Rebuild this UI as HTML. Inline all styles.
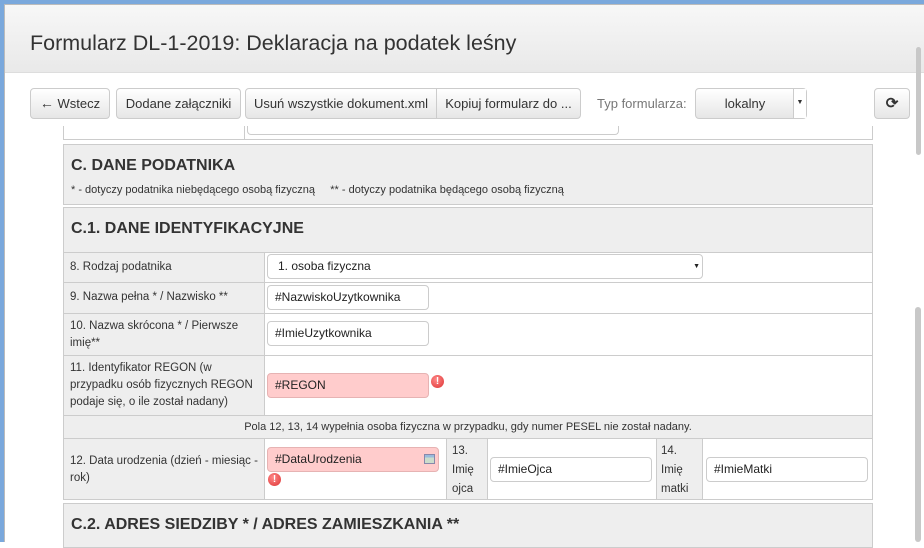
<!DOCTYPE html>
<html><head><meta charset="utf-8"><style>
*{box-sizing:border-box;margin:0;padding:0}
body{width:924px;height:542px;overflow:hidden;background:#fff;font-family:"Liberation Sans",Arial,sans-serif;color:#333;position:relative}
.a{position:absolute}
.btn{position:absolute;top:88px;height:31px;border:1px solid #ccc;border-radius:4px;background:linear-gradient(#fff,#e6e6e6);font-size:13px;line-height:29px;text-align:center;color:#333;white-space:nowrap}
.cell{position:absolute;border:1px solid #ccc;font-size:11.5px;line-height:17px}
.g{background:#eee}
.inp{position:absolute;height:25px;border:1px solid #ccc;border-radius:4px;background:#fff;font-size:12px;line-height:23px;padding-left:7px;color:#222}
.err{background:#fcc;border-color:#e6b3b3}
.ex{position:absolute;width:13px;height:13px;border-radius:50%;background:radial-gradient(circle at 40% 35%,#f88,#d33);color:#fff;font-size:10px;font-weight:bold;line-height:13px;text-align:center}
h3{font-size:16px;font-weight:bold;color:#333}
</style></head><body>
<div class="a" style="left:0;top:0;width:924px;height:4px;background:#7aa8dc"></div>
<div class="a" style="left:0;top:0;width:4px;height:542px;background:#7aa8dc"></div>
<div class="a" style="left:4px;top:4px;width:920px;height:538px;border:1px solid #bbb;border-right:none;border-bottom:none"></div>
<div class="a" style="left:5px;top:5px;width:919px;height:68px;background:linear-gradient(#f7f7f7,#e9e9e9);border-bottom:1px solid #ddd"></div>
<div class="a" style="left:30px;top:31px;font-size:21.5px;color:#333">Formularz DL-1-2019: Deklaracja na podatek leśny</div>

<div class="btn" style="left:30px;width:80px"><b style="font-size:14px">&#8592;</b> Wstecz</div>
<div class="btn" style="left:116px;width:125px">Dodane załączniki</div>
<div class="btn" style="left:245px;width:192px;border-radius:4px 0 0 4px">Usuń wszystkie dokument.xml</div>
<div class="btn" style="left:436px;width:145px;border-radius:0 4px 4px 0">Kopiuj formularz do ...</div>
<div class="a" style="left:597px;top:96px;font-size:13px;color:#777">Typ formularza:</div>
<div class="btn" style="left:695px;width:112px;padding-right:12px">lokalny<div class="a" style="right:0;top:0;width:13px;height:29px;border-left:1px solid #ccc;background:#fff;font-size:7px;line-height:27px">▼</div></div>
<div class="btn" style="left:874px;width:36px;font-weight:bold;font-size:15px">⟳</div>

<div class="cell" style="left:63px;top:126px;width:182px;height:14px;border-top:none"></div>
<div class="cell" style="left:244px;top:126px;width:629px;height:14px;border-top:none"></div>
<div class="a" style="left:247px;top:126px;width:372px;height:9px;border:1px solid #ccc;border-top:none;border-radius:0 0 4px 4px"></div>

<div class="cell g" style="left:63px;top:144px;width:810px;height:61px;padding:12px 7px"><h3>C. DANE PODATNIKA</h3><div style="font-size:11px;margin-top:8px;white-space:pre">* - dotyczy podatnika niebędącego osobą fizyczną     ** - dotyczy podatnika będącego osobą fizyczną</div></div>
<div class="cell g" style="left:63px;top:207px;width:810px;height:46px;padding:12px 7px"><h3>C.1. DANE IDENTYFIKACYJNE</h3></div>

<div class="cell g" style="left:63px;top:252px;width:202px;height:31px;padding:6px 6px">8. Rodzaj podatnika</div>
<div class="cell" style="left:264px;top:252px;width:609px;height:31px"></div>
<div class="inp" style="left:267px;top:254px;width:436px;padding-left:10px">1. osoba fizyczna<span class="a" style="right:2px;top:0;font-size:7px">▼</span></div>

<div class="cell g" style="left:63px;top:282px;width:202px;height:32px;padding:6px 6px">9. Nazwa pełna * / Nazwisko **</div>
<div class="cell" style="left:264px;top:282px;width:609px;height:32px"></div>
<div class="inp" style="left:267px;top:285px;width:162px">#NazwiskoUzytkownika</div>

<div class="cell g" style="left:63px;top:313px;width:202px;height:43px;padding:4px 6px">10. Nazwa skrócona * / Pierwsze imię**</div>
<div class="cell" style="left:264px;top:313px;width:609px;height:43px"></div>
<div class="inp" style="left:267px;top:321px;width:162px">#ImieUzytkownika</div>

<div class="cell g" style="left:63px;top:355px;width:202px;height:61px;padding:4px 6px">11. Identyfikator REGON (w przypadku osób fizycznych REGON podaje się, o ile został nadany)</div>
<div class="cell" style="left:264px;top:355px;width:609px;height:61px"></div>
<div class="inp err" style="left:267px;top:373px;width:162px">#REGON</div>
<div class="ex" style="left:431px;top:375px">!</div>

<div class="cell g" style="left:63px;top:415px;width:810px;height:24px;text-align:center;padding-top:3px;font-size:11px">Pola 12, 13, 14 wypełnia osoba fizyczna w przypadku, gdy numer PESEL nie został nadany.</div>

<div class="cell g" style="left:63px;top:438px;width:202px;height:62px;padding:14px 6px">12. Data urodzenia (dzień - miesiąc - rok)</div>
<div class="cell" style="left:264px;top:438px;width:183px;height:62px"></div>
<div class="inp err" style="left:267px;top:447px;width:172px">#DataUrodzenia<span class="a" style="right:3px;top:6px;width:11px;height:10px;border:1px solid #88a;background:linear-gradient(#9bd 30%,#cdc 30%)"></span></div>
<div class="ex" style="left:268px;top:473px">!</div>
<div class="cell g" style="left:446px;top:438px;width:42px;height:62px;padding:3px 5px;line-height:19px">13. Imię ojca</div>
<div class="cell" style="left:487px;top:438px;width:170px;height:62px"></div>
<div class="inp" style="left:490px;top:457px;width:162px">#ImieOjca</div>
<div class="cell g" style="left:656px;top:438px;width:47px;height:62px;padding:3px 4px;line-height:19px">14. Imię matki</div>
<div class="cell" style="left:702px;top:438px;width:171px;height:62px"></div>
<div class="inp" style="left:706px;top:457px;width:162px">#ImieMatki</div>

<div class="cell g" style="left:63px;top:503px;width:810px;height:45px;padding:12px 7px"><h3>C.2. ADRES SIEDZIBY * / ADRES ZAMIESZKANIA **</h3></div>

<div class="a" style="left:916px;top:47px;width:5px;height:108px;background:#c8c8c8;border-radius:3px"></div>
<div class="a" style="left:915px;top:307px;width:6px;height:235px;background:#c8c8c8;border-radius:3px"></div>
</body></html>
